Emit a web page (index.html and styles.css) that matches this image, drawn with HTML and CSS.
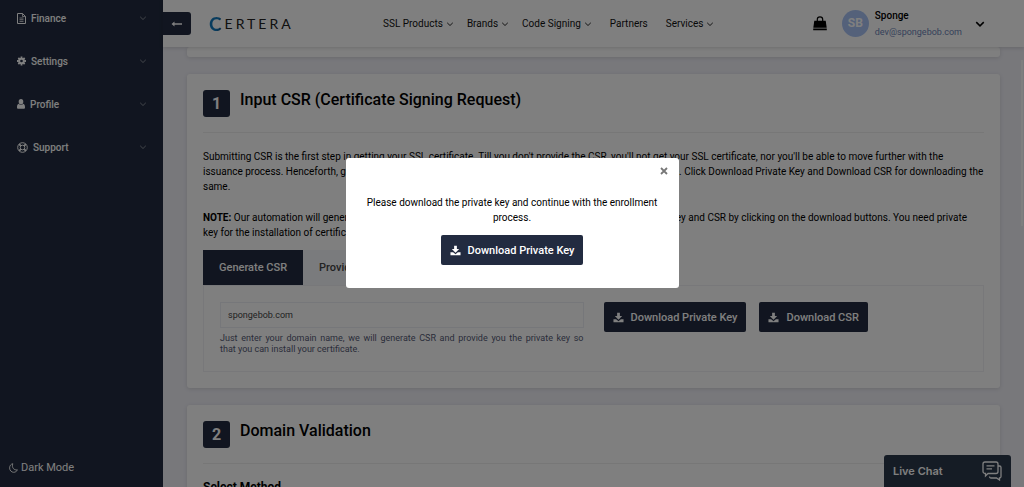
FILE: index.html
```html
<!DOCTYPE html>
<html lang="en">

<head>
    <meta charset="UTF-8">
    <meta name="viewport" content="width=device-width, initial-scale=1.0">
    <title>Certera - Generate SSL</title>
    <link rel="stylesheet" href="styles.css">
</head>

<body>

    <!-- shared icons -->
    <svg class="sprite" aria-hidden="true">
        <symbol id="chevron" viewBox="0 0 8 8">
            <path d="M1.200 2.800 4 5.500 6.800 2.800" fill="none" stroke="currentColor" stroke-width=".9" />
        </symbol>
        <symbol id="download" viewBox="0 0 12 12">
            <path d="M4.500.8h3v3.600h2.500L6 8.400 2 4.400h2.500z" fill="currentColor" />
            <path d="M.5 7.800h2.900L6 10.200l2.600-2.400h2.900v3.400H.5z" fill="currentColor" />
        </symbol>
    </svg>

    <div class="app">
        <aside class="sidebar">
            <nav class="menu">
                <a href="#" class="menu-item">
                    <svg class="menu-icon" width="9" height="11" viewBox="0 0 9 11" fill="none" stroke="currentColor">
                        <path d="M.5.500h5L8.500 3.500v7H.5z" />
                        <path d="M5.500.500v3h3M2.500 5h4M2.500 6.700h4M2.500 8.400h4" stroke-width=".8" />
                    </svg>
                    <span>Finance</span>
                    <svg class="menu-arrow"><use href="#chevron" /></svg>
                </a>
                <a href="#" class="menu-item">
                    <svg class="menu-icon" width="9" height="10" viewBox="0 0 10 10" fill="none" stroke="currentColor">
                        <circle cx="5" cy="5" r="2.600" stroke-width="2.200" />
                        <path d="M5 0v2M5 8v2M0 5h2M8 5h2M1.500 1.500l1.400 1.400M7.100 7.100l1.400 1.400M8.500 1.500 7.100 2.900M2.900 7.100 1.500 8.500" stroke-width="2" />
                    </svg>
                    <span>Settings</span>
                    <svg class="menu-arrow"><use href="#chevron" /></svg>
                </a>
                <a href="#" class="menu-item">
                    <svg class="menu-icon" width="8" height="10" viewBox="0 0 8 10" fill="currentColor">
                        <ellipse cx="4" cy="2.800" rx="2.300" ry="2.700" />
                        <path d="M1.800 4.800C.4 5.200 0 6.600 0 8.400 0 9.200.5 9.700 1.300 9.700h5.400c.8 0 1.300-.5 1.300-1.300 0-1.800-.4-3.200-1.800-3.600C5.500 6.300 2.500 6.300 1.800 4.800z" />
                    </svg>
                    <span>Profile</span>
                    <svg class="menu-arrow"><use href="#chevron" /></svg>
                </a>
                <a href="#" class="menu-item">
                    <svg class="menu-icon" width="11" height="11" viewBox="0 0 11 11" fill="none" stroke="currentColor">
                        <circle cx="5.500" cy="5.500" r="4.800" />
                        <circle cx="5.500" cy="5.500" r="2.300" />
                        <path d="M2.200 2.200l1.600 1.600M8.800 2.200 7.200 3.800M2.200 8.800l1.600-1.600M8.800 8.800 7.200 7.200" stroke-width="1.800" />
                    </svg>
                    <span>Support</span>
                    <svg class="menu-arrow"><use href="#chevron" /></svg>
                </a>
            </nav>
            <button type="button" class="dark-mode">
                <svg width="9" height="10" viewBox="0 0 9 10" fill="none" stroke="currentColor" stroke-width=".9">
                    <path d="M3.800.7C1.900 1.100.6 2.800.6 4.900c0 2.500 1.800 4.400 4.100 4.400 1.700 0 3.100-1 3.700-2.500C5.300 7.600 2.300 4.700 3.800.7z" />
                </svg>
                Dark Mode
            </button>
        </aside>

        <div class="main">
            <header class="topbar">
                <button type="button" class="toggle" aria-label="Collapse menu">
                    <svg width="12" height="6" viewBox="0 0 12 6">
                        <path d="M3.500.500v1.700h7.500v1.600H3.500v1.700L.5 3z" fill="currentColor" />
                    </svg>
                </button>
                <a href="#" class="logo"><span class="logo-c">C</span>ERTERA</a>
                <nav class="topnav">
                    <a href="#">SSL Products <svg><use href="#chevron" /></svg></a>
                    <a href="#">Brands <svg><use href="#chevron" /></svg></a>
                    <a href="#">Code Signing <svg><use href="#chevron" /></svg></a>
                    <a href="#" class="plain">Partners</a>
                    <a href="#">Services <svg><use href="#chevron" /></svg></a>
                </nav>
                <div class="account">
                    <a href="#" class="cart" aria-label="Cart">
                        <svg width="14" height="15" viewBox="0 0 14 15">
                            <path d="M4.300 6V3.500a2.700 2.700 0 0 1 5.400 0V6" fill="none" stroke="currentColor" stroke-width="1.200" />
                            <path d="M1.300 4.700h11.400l1 7H.3z M.2 12.500h13.600v1.800H.2z" fill="currentColor" />
                        </svg>
                    </a>
                    <span class="avatar">SB</span>
                    <div class="user">
                        <strong>Sponge</strong>
                        <span>dev@spongebob.com</span>
                    </div>
                    <button type="button" class="user-arrow" aria-label="Account menu">
                        <svg width="10" height="10" viewBox="0 0 8 8">
                            <path d="M1 2.500 4 5.500 7 2.500" fill="none" stroke="currentColor" stroke-width="1.200" />
                        </svg>
                    </button>
                </div>
            </header>

            <main class="content">
                <section class="card card-prev"></section>

                <section class="card">
                    <div class="card-head">
                        <span class="step">1</span>
                        <h2>Input CSR (Certificate Signing Request)</h2>
                    </div>
                    <p class="text">Submitting CSR is the first step in getting your SSL certificate. Till you don't provide the CSR, you'll not get your SSL certificate, nor you'll be able to move further with the issuance process. Henceforth, generate the CSR and the private key securely by entering your domain name. Click Download Private Key and Download CSR for downloading the same.</p>
                    <p class="text"><strong>NOTE:</strong> Our automation will generate the new CSR for you automatically, so you can download your private key and CSR by clicking on the download buttons. You need private key for the installation of certificate.</p>

                    <div class="tabs">
                        <button type="button" class="tab active">Generate CSR</button>
                        <button type="button" class="tab">Provide CSR</button>
                    </div>
                    <div class="panel">
                        <div class="field">
                            <input type="text" id="domain" value="spongebob.com">
                            <label for="domain">Just enter your domain name, we will generate CSR and provide you the private key so that&nbsp;you can install your certificate.</label>
                        </div>
                        <div class="actions">
                            <button type="button" class="btn"><svg><use href="#download" /></svg>Download Private Key</button>
                            <button type="button" class="btn"><svg><use href="#download" /></svg>Download CSR</button>
                        </div>
                    </div>
                </section>

                <section class="card">
                    <div class="card-head">
                        <span class="step">2</span>
                        <h2>Domain Validation</h2>
                    </div>
                    <h3>Select Method</h3>
                </section>
            </main>
        </div>
    </div>

    <button type="button" class="chat">
        Live Chat
        <svg width="20" height="20" viewBox="0 0 20 20" fill="none" stroke="currentColor" stroke-width="1.300">
            <path d="M3 1h11a2 2 0 0 1 2 2v7.500a2 2 0 0 1-2 2H6L3.500 15v-2.500H3a2 2 0 0 1-2-2V3a2 2 0 0 1 2-2z" />
            <path d="M4.500 4.800h8M4.500 7.800h5.500" />
            <path d="M16 5h1.500A1.500 1.500 0 0 1 19 6.500v9a1.500 1.500 0 0 1-1.500 1.500v2L14.500 17H9a1.500 1.500 0 0 1-1.500-1.500" />
        </svg>
    </button>
    <div class="scroll-thumb"></div>

    <div class="overlay">
        <div class="modal" role="dialog" aria-modal="true" aria-label="Download private key">
            <button type="button" class="close" aria-label="Close">
                <svg width="8" height="8" viewBox="0 0 8 8">
                    <path d="M1 1l6 6M7 1 1 7" stroke="currentColor" stroke-width="1.800" />
                </svg>
            </button>
            <p>Please download the private key and continue with the enrollment process.</p>
            <button type="button" class="btn"><svg><use href="#download" /></svg>Download Private Key</button>
        </div>
    </div>

</body>

</html>
```

FILE: styles.css
```css
* {
    box-sizing: border-box;
}

body {
    margin: 0;
    font-family: Roboto, "Liberation Sans", sans-serif;
    font-size: 10px;
    line-height: 15px;
    color: #000;
    background-color: #f0f0f7;
}

a {
    color: inherit;
    text-decoration: none;
}

button {
    font-family: inherit;
    border: none;
    padding: 0;
    cursor: pointer;
}

svg {
    flex: none;
}

.sprite {
    position: absolute;
    width: 0;
    height: 0;
}

.app {
    display: flex;
    height: 100vh;
    overflow: hidden;
}

/* Sidebar */
.sidebar {
    width: 163px;
    flex: none;
    display: flex;
    flex-direction: column;
    justify-content: space-between;
    background-color: #222b40;
    color: #fff;
}

.menu-item {
    display: flex;
    align-items: center;
    gap: 5px;
    height: 43px;
    padding: 0 16px 7px 17px;
    font-weight: 500;
}

.menu-arrow {
    width: 8px;
    height: 8px;
    margin-left: auto;
    opacity: 0.5;
}

.dark-mode {
    display: flex;
    align-items: center;
    gap: 3px;
    padding: 0 9px 12px;
    background: none;
    color: #fff;
    font-size: 11px;
    line-height: 15px;
}

/* Top bar */
.main {
    flex: 1;
    min-width: 0;
    display: flex;
    flex-direction: column;
}

.topbar {
    display: flex;
    align-items: center;
    flex: none;
    height: 47px;
    padding-right: 39px;
    background-color: #fff;
    box-shadow: 0 1px 4px rgba(0, 0, 0, 0.15);
    z-index: 1;
}

.toggle {
    display: flex;
    align-items: center;
    justify-content: center;
    width: 28px;
    height: 23px;
    border-radius: 0 3px 3px 0;
    background-color: #222b40;
    color: #fff;
}

.logo {
    display: flex;
    align-items: center;
    width: 84px;
    margin-left: 18px;
    font-family: Lato, sans-serif;
    font-size: 14px;
    letter-spacing: 3px;
    color: #222;
}

.logo-c {
    font-size: 19px;
    font-weight: 700;
    background: linear-gradient(100deg, #1179bd 50%, #16395c);
    background-clip: text;
    -webkit-background-clip: text;
    color: transparent;
}

.topnav {
    display: flex;
    align-items: center;
    gap: 13px;
    margin-left: 90px;
    color: #111;
}

.topnav a {
    display: flex;
    align-items: center;
    gap: 3px;
    white-space: nowrap;
}

.topnav svg {
    width: 8px;
    height: 8px;
}

.topnav .plain {
    padding: 0 5px;
}

.account {
    display: flex;
    align-items: center;
    margin-left: auto;
}

.cart {
    display: flex;
}

.avatar {
    width: 27px;
    height: 27px;
    margin: 0 6px 0 15px;
    border-radius: 50%;
    background-color: #a9c3f5;
    color: #fff;
    font-size: 12px;
    font-weight: 700;
    line-height: 27px;
    text-align: center;
}

.user strong,
.user span {
    display: block;
    line-height: 16px;
}

.user strong {
    font-weight: 500;
}

.user span {
    color: #6c83b5;
    font-size: 9px;
}

.user-arrow {
    display: flex;
    margin-left: 13px;
    background: none;
    color: #000;
}

/* Content */
.content {
    flex: 1;
    min-height: 0;
    display: flex;
    flex-direction: column;
    gap: 17px;
    padding: 0 24px;
    overflow: hidden;
}

.card {
    flex: none;
    padding: 16px;
    border-radius: 3px;
    background-color: #fff;
    box-shadow: 0 1px 4px rgba(0, 0, 0, 0.12);
}

.card-prev {
    height: 10px;
    padding: 0;
}

.card-head {
    display: flex;
    gap: 10px;
    padding-bottom: 15px;
    margin-bottom: 16px;
    border-bottom: 1px solid #eee;
}

.step {
    width: 27px;
    height: 27px;
    border-radius: 3px;
    background-color: #222b40;
    color: #fff;
    font-size: 16px;
    font-weight: 700;
    line-height: 27px;
    text-align: center;
}

h2 {
    margin: 0;
    font-size: 16px;
    font-weight: 500;
    line-height: 20px;
}

h3 {
    margin: 0;
    font-size: 12px;
    font-weight: 700;
    line-height: 15px;
}

.text {
    margin: 0 0 16px;
}

.text + .text {
    margin-bottom: 10px;
}

.tabs {
    display: flex;
}

.tab {
    height: 35px;
    padding: 0 16px;
    background-color: #f4f6fb;
    color: #444;
    font-size: 11px;
    font-weight: 500;
}

.tab.active {
    background-color: #222b40;
    color: #fff;
}

.panel {
    display: grid;
    grid-template-columns: 1fr 1fr;
    gap: 20px;
    padding: 16px;
    border: 1px solid #f0f0f4;
}

.field input {
    display: block;
    width: 100%;
    height: 26px;
    padding: 0 7px;
    border: 1px solid #eceef4;
    background-color: #fff;
    color: #444;
    font-family: inherit;
    font-size: 9px;
}

.field label {
    display: block;
    margin-top: 5px;
    color: #555a75;
    font-size: 9px;
    line-height: 11px;
    text-align: justify;
}

.actions {
    display: flex;
    gap: 13px;
    align-items: flex-start;
}

.btn {
    display: inline-flex;
    align-items: center;
    gap: 7px;
    height: 30px;
    padding: 0 9px;
    border-radius: 2px;
    background-color: #222b40;
    color: #fff;
    font-size: 11px;
    font-weight: 500;
    white-space: nowrap;
}

.btn svg {
    width: 11px;
    height: 11px;
}

/* Live chat */
.chat {
    position: fixed;
    right: 13px;
    bottom: 0;
    display: flex;
    align-items: center;
    justify-content: space-between;
    width: 127px;
    height: 32px;
    padding: 0 9px;
    border-radius: 3px 3px 0 0;
    background-color: #2a384a;
    color: #fff;
    font-family: Inter, sans-serif;
    font-size: 11px;
    font-weight: 600;
    z-index: 2;
}

.scroll-thumb {
    position: fixed;
    top: 60px;
    right: 1px;
    width: 2px;
    height: 166px;
    background-color: #fff;
}

/* Modal */
.overlay {
    position: fixed;
    inset: 0;
    display: flex;
    align-items: flex-start;
    justify-content: center;
    padding-top: 158px;
    background-color: rgba(0, 0, 0, 0.5);
    z-index: 3;
}

.modal {
    position: relative;
    width: 333px;
    padding: 37px 16px 23px;
    border-radius: 3px;
    background-color: #fff;
    text-align: center;
}

.modal p {
    margin: 0 0 10px;
}

.close {
    position: absolute;
    top: 9px;
    right: 11px;
    display: flex;
    background: none;
    color: #777;
}
```
